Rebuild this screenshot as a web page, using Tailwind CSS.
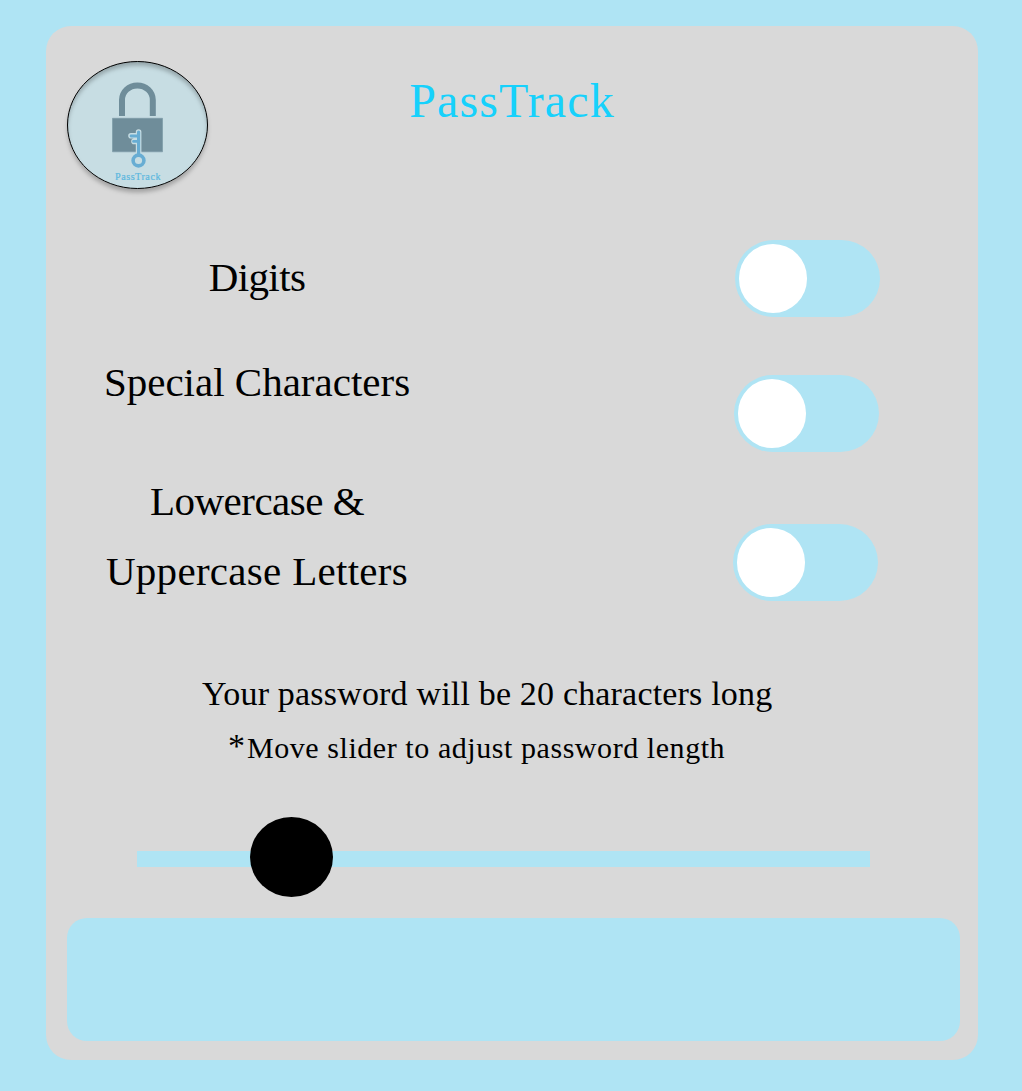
<!DOCTYPE html>
<html lang="en">
<head>
<meta charset="utf-8">
<title>PassTrack</title>
<script src="https://cdn.jsdelivr.net/npm/@tailwindcss/browser@4"></script>
</head>
<body class="bg-[#afe4f4] font-['Liberation_Serif',serif] text-black">
<div class="h-[1091px] w-[1022px] overflow-hidden pt-[26px] pl-[46px]">
  <main class="flex h-[1034px] w-[932px] flex-col rounded-[25px] bg-[#d9d9d9]">
    <header class="relative flex h-[214px] shrink-0 justify-center pt-[41px]">
      <svg class="absolute top-[30px] left-[14px]" width="156" height="146" viewBox="60 56 156 146">
        <defs>
          <filter id="shadow" x="-20%" y="-20%" width="140%" height="140%"><feDropShadow dx="0" dy="4" stdDeviation="2" flood-color="#000" flood-opacity=".25"/></filter>
          <filter id="blur"><feGaussianBlur stdDeviation="2"/></filter>
          <clipPath id="badge"><ellipse cx="137.5" cy="125" rx="70" ry="63.5"/></clipPath>
        </defs>
        <ellipse cx="137.5" cy="125" rx="70" ry="63.5" fill="#c7dde3" filter="url(#shadow)"/>
        <g clip-path="url(#badge)"><path d="M55 50h165v150H55zM67.500 129a70 63.500 0 0 0 140 0a70 63.500 0 0 0-140 0z" fill="#000" fill-opacity=".25" fill-rule="evenodd" filter="url(#blur)"/></g>
        <ellipse cx="137.500" cy="125" rx="70" ry="63.500" fill="none" stroke="#000"/>
        <path d="M122 116v-16a15.300 14.500 0 0 1 30.800 0V116" fill="none" stroke="#6f8d9a" stroke-width="6"/>
        <path d="M112.500 118.300h50v33.500h-50z" fill="#6f8d9a" stroke="#7d9ba8" stroke-width=".7"/>
        <g fill="none" stroke-linecap="round">
          <g stroke="#c7dde3" stroke-width="6"><path d="M138.600 154v-22M138.500 135.800h-7.500M138.500 141.400h-4.500" stroke-width="5.600"/><circle cx="138.500" cy="160.500" r="5"/></g>
          <g stroke="#68add3"><path d="M138.600 155v-23" stroke-width="3.200"/><path d="M138 136h-7M138 141.400h-4.500" stroke-width="2.800"/><circle cx="138.500" cy="160.500" r="5.400" stroke-width="3.600"/></g>
        </g>
        <text x="115" y="180" font-size="10.200" textLength="45.500" fill="#5cb8df" stroke="#5cb8df" stroke-width=".2">PassTrack</text>
      </svg>
      <h1 class="text-[48px] leading-[68px] tracking-[1.1px] text-[#16d1fc]">PassTrack</h1>
    </header>

    <section class="flex h-[424px] shrink-0">
      <div class="flex w-[422px] flex-col text-center text-[41px] leading-[70px] whitespace-nowrap">
        <p class="mt-[2px] tracking-[-0.6px]">Digits</p>
        <p class="mt-[35px]">Special Characters</p>
        <p class="mt-[49px]"><span class="tracking-[-0.5px]">Lowercase &amp;</span><br><span class="tracking-[0.3px]">Uppercase Letters</span></p>
      </div>
      <div class="ml-[265px] flex flex-col">
        <button aria-label="Digits" class="ml-[2px] h-[77px] w-[145px] rounded-full bg-[#afe4f4] pb-px pl-[4px]"><span class="block h-[69px] w-[68px] rounded-full bg-white"></span></button>
        <button aria-label="Special characters" class="mt-[58px] ml-px h-[77px] w-[145px] rounded-full bg-[#afe4f4] pb-px pl-[4px]"><span class="block h-[69px] w-[68px] rounded-full bg-white"></span></button>
        <button aria-label="Letters" class="mt-[72px] h-[77px] w-[145px] rounded-full bg-[#afe4f4] pl-[4px]"><span class="block h-[69px] w-[68px] rounded-full bg-white"></span></button>
      </div>
    </section>

    <section class="h-[153px] shrink-0 whitespace-nowrap">
      <p class="ml-[156px] pt-px text-[34px] leading-[58px] tracking-[0.18px]">Your password will be 20 characters long</p>
      <p class="ml-[182px] flex text-[30px] leading-[50px]"><span class="-mt-[2px] w-[19px] text-[34px]">*</span><span class="tracking-[0.56px]">Move slider to adjust password length</span></p>
    </section>

    <div class="relative ml-[91px] flex h-[80px] w-[733px] shrink-0 items-center">
      <div class="mt-[4px] h-[16px] w-full bg-[#afe4f4]"></div>
      <div class="absolute top-0 left-[113px] h-[80px] w-[83px] rounded-[50%] bg-black"></div>
    </div>

    <div class="mt-[21px] ml-[21px] h-[123px] w-[893px] shrink-0 rounded-[20px] bg-[#afe4f4]"></div>
  </main>
</div>
</body>
</html>
